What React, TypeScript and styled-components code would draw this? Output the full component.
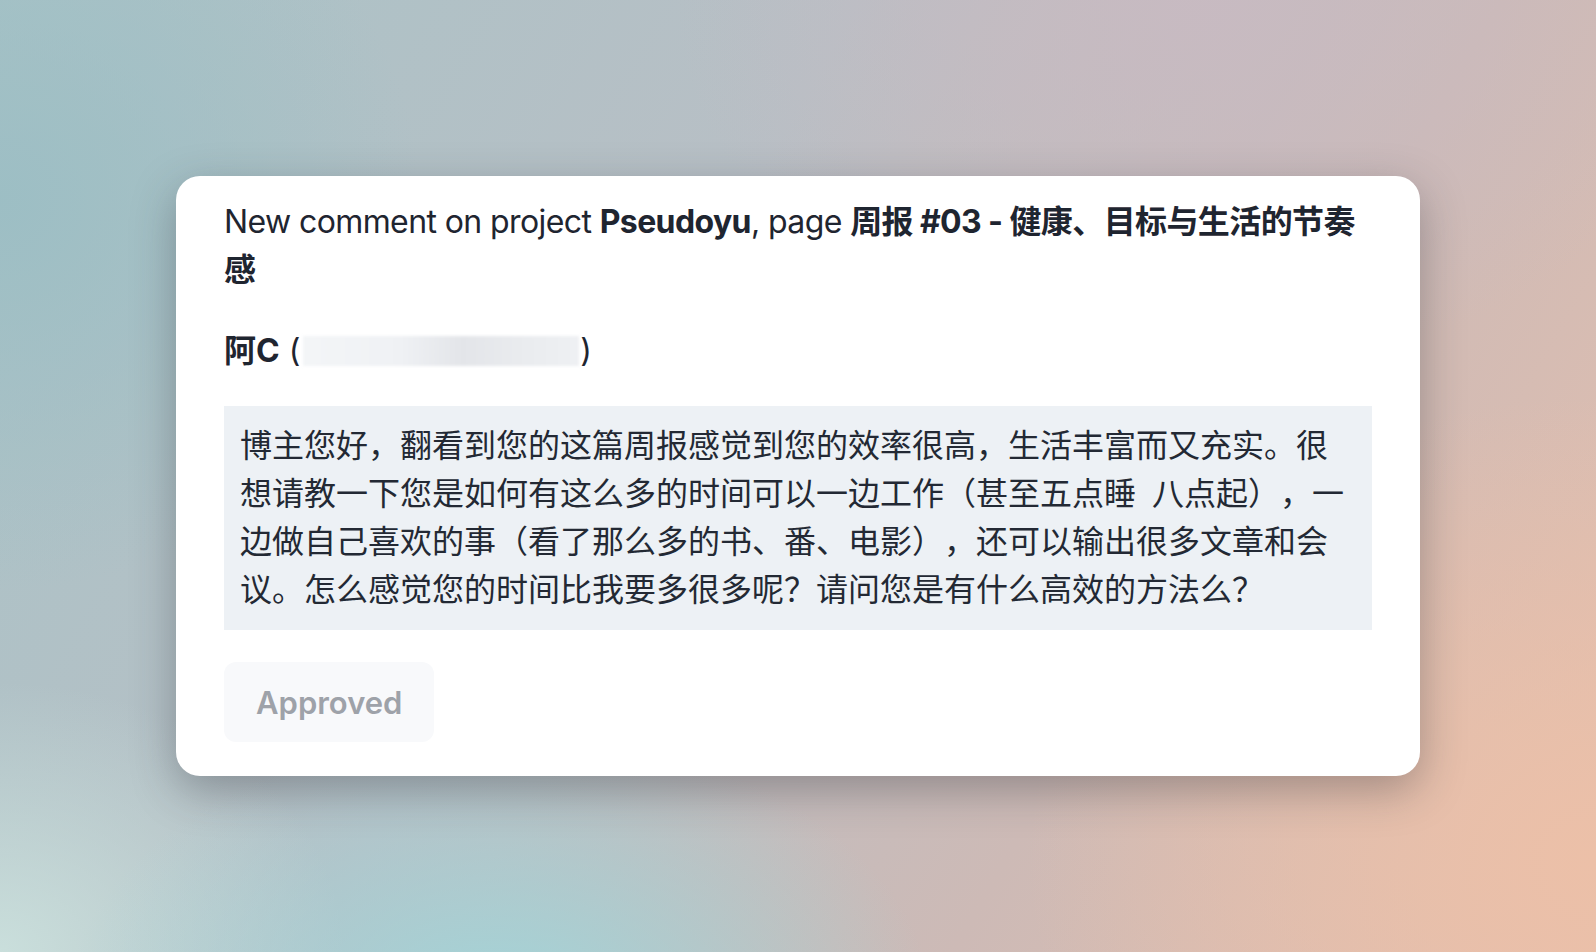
import React from "react";
import styled, { createGlobalStyle } from "styled-components";

const GlobalStyle = createGlobalStyle`
	html, body {
		margin: 0;
		padding: 0;
	}
	body {
		font-family: "Inter", "Noto Sans CJK SC", sans-serif;
		text-spacing-trim: space-all;
	}
`;

const SBackdrop = styled.div`
	width: 100%;
	height: 100vh;
	min-height: 952px;
	display: flex;
	align-items: center;
	justify-content: center;
	background:
		radial-gradient(ellipse 620px 400px at 500px 1010px, rgba(160, 214, 218, 0.95), rgba(160, 214, 218, 0) 70%),
		radial-gradient(ellipse 460px 360px at 0px 952px, rgba(204, 226, 222, 0.9), rgba(204, 226, 222, 0) 75%),
		radial-gradient(ellipse 760px 620px at 1596px 860px, rgba(236, 192, 168, 1), rgba(236, 192, 168, 0) 75%),
		radial-gradient(ellipse 700px 500px at 1200px 0px, rgba(200, 186, 194, 0.9), rgba(200, 186, 194, 0) 75%),
		radial-gradient(ellipse 560px 520px at 0px 200px, rgba(156, 190, 196, 0.95), rgba(156, 190, 196, 0) 75%),
		linear-gradient(120deg, #a9c3c7 0%, #b8bfc5 40%, #cdbab6 70%, #e4bfae 100%);
`;

const SCard = styled.div`
	width: 1244px;
	box-sizing: border-box;
	padding: 22px 48px 34px;
	background: #ffffff;
	border-radius: 24px;
	box-shadow: 0 14px 44px rgba(40, 44, 52, 0.34);
	color: #1f2530;
`;

const STitle = styled.p`
	margin: 0;
	font-size: 32px;
	line-height: 48px;
	font-weight: 400;
	letter-spacing: -0.6px;
	b {
		font-weight: 700;
	}
`;

const SAuthor = styled.div`
	margin-top: 33px;
	display: flex;
	align-items: center;
	font-size: 32px;
	line-height: 48px;
	b {
		font-weight: 700;
	}
	.paren {
		font-weight: 400;
	}
`;

const SRedacted = styled.span`
	display: inline-block;
	width: 276px;
	height: 30px;
	margin: 0 1px 0 3px;
	background: linear-gradient(90deg, #f3f5f7 0%, #eff1f4 35%, #e3e5e9 58%, #e9ebee 78%, #eef0f3 100%);
	filter: blur(1.5px);
`;

const SQuote = styled.div`
	margin-top: 31px;
	padding: 13px 16px 19px;
	background: #edf1f5;
	font-size: 32px;
	line-height: 48px;
	color: #232934;
	font-family: "Noto Sans CJK SC", "Inter", sans-serif;
`;

const SStatusButton = styled.button`
	margin-top: 32px;
	display: block;
	height: 80px;
	padding: 0 32px;
	border: none;
	border-radius: 12px;
	background: #f8f9fb;
	color: #9ea2a9;
	font-family: "Inter", sans-serif;
	font-size: 31px;
	font-weight: 600;
	cursor: default;
`;

export default function App() {
	return (
		<>
			<GlobalStyle />
			<SBackdrop>
				<SCard>
					<STitle>
						New comment on project <b>Pseudoyu</b>, page <b>周报 #03 - 健康、目标与生活的节奏感</b>
					</STitle>
					<SAuthor>
						<b>阿C</b>
						<span className={"paren"}>&nbsp;(</span>
						<SRedacted />
						<span className={"paren"}>)</span>
					</SAuthor>
					<SQuote>
						博主您好，翻看到您的这篇周报感觉到您的效率很高，生活丰富而又充实。很想请教一下您是如何有这么多的时间可以一边工作（甚至五点睡{"\u2002"}八点起），一边做自己喜欢的事（看了那么多的书、番、电影），还可以输出很多文章和会议。怎么感觉您的时间比我要多很多呢？请问您是有什么高效的方法么？
					</SQuote>
					<SStatusButton disabled>Approved</SStatusButton>
				</SCard>
			</SBackdrop>
		</>
	);
}
